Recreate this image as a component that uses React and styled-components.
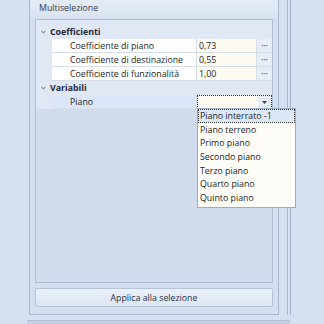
import React from "react";
import styled, { createGlobalStyle } from "styled-components";

const Global = createGlobalStyle`
  html, body { margin: 0; padding: 0; }
  body {
    width: 324px; height: 324px; overflow: hidden;
    background: #d5e1f0;
    font-family: "Open Sans", "Noto Sans", sans-serif;
    font-size: 8.8px;
    color: #1e1e1e;
  }
`;

const Page = styled.div`
  width: 324px; height: 324px;
  display: flex; flex-direction: column;
  background: #d5e1f0;
`;
const MainRow = styled.div`
  display: flex; height: 315px;
`;
const Gutter = styled.div`
  width: 29px; flex: none;
`;
const Panel = styled.div`
  width: 250px; flex: none;
  display: flex; flex-direction: column;
  border-left: 1px solid #a7b8cf;
  border-right: 1px solid #a7b8cf;
  border-bottom: 1px solid #a7b8cf;
  background: #d3dfee;
  box-sizing: border-box;
`;
const Header = styled.div`
  height: 18px; flex: none; box-sizing: border-box;
  padding: 0 0 3px 9px;
  display: flex; align-items: center;
  background: linear-gradient(#e3ebf6, #dae4f1);
  color: #2f3b4c;
`;
const Body = styled.div`
  flex: 1; display: flex; flex-direction: column;
  padding: 1px 5px 7px 5px;
  gap: 5px;
`;
const Tree = styled.div`
  flex: 1;
  border: 1px solid #aebdd1;
  background: #d0dcec;
  position: relative;
`;
const Grid = styled.div`
  background: #dfe8f4;
  padding-top: 5px;
`;
const CatRow = styled.div`
  height: 14px; display: flex; align-items: center;
  font-weight: 700; color: #1f2a3a;
`;
const Chevron = styled.svg`
  width: 5px; height: 4px; margin: 0 4px 0 5px;
`;
const PropRow = styled.div`
  height: 14px; display: flex;
  margin-left: 16px;
`;
const NameCell = styled.div`
  width: 145px; flex: none; box-sizing: border-box;
  padding-left: 18px;
  display: flex; align-items: center;
  background: ${p => (p.$sel ? "#dbe7f8" : "#ffffff")};
  border-bottom: 1px solid #d6dee9;
  border-right: 1px solid #d6dee9;
  white-space: nowrap;
`;
const ValueCell = styled.div`
  flex: 1; box-sizing: border-box;
  padding-left: 2px;
  display: flex; align-items: center;
  background: #fdfaf1;
  border-bottom: 1px solid #d6dee9;
  border-right: 1px solid #d6dee9;
`;
const Ellipsis = styled.div`
  width: 15px; flex: none; box-sizing: border-box;
  display: flex; align-items: center; justify-content: center;
  background: #e6edf7;
  border-bottom: 1px solid #d6dee9;
  color: #5a6a80; font-size: 6px;
`;
const Editor = styled.div`
  flex: 1; box-sizing: border-box; position: relative;
  display: flex; align-items: center; justify-content: flex-end;
  background: #fdfaf1;
  border: 1px dotted #333;
`;
const Arrow = styled.div`
  width: 13px; height: 100%; display: flex; align-items: center; justify-content: center;
  background: #e6edf7;
`;
const DropList = styled.div`
  position: absolute; left: -1px; top: 12px;
  width: 99px;
  background: #fdfcf6;
  border: 1px solid #9aabc3;
  box-sizing: border-box;
  padding: 0 0 2px 0;
  z-index: 2;
`;
const Item = styled.div`
  height: 13.7px; display: flex; align-items: center;
  padding-left: 2px; box-sizing: border-box;
  color: #1e1e1e;
  white-space: nowrap;
  ${p => p.$active && `
    background: #dde8f6;
    border: 1px dotted #333;
    padding-left: 1px;
  `}
`;
const ApplyButton = styled.button`
  height: 19px; flex: none;
  font: inherit; color: #2a3444;
  border: 1px solid #b4c3d6; border-radius: 2px;
  background: linear-gradient(#eaf1fa, #dbe6f3);
  padding: 0;
`;
const Splitter = styled.div`
  width: 15px; flex: none; display: flex;
`;
const Line = styled.div`
  width: ${p => p.$w}px; background: ${p => p.$c};
  margin-left: ${p => p.$ml || 0}px;
`;
const BottomStrip = styled.div`
  flex: 1; display: flex; align-items: flex-end;
  padding-left: 27px;
`;
const BottomLine = styled.div`
  width: 263px; height: 3px; background: #c3d0e2; border-top: 1px solid #b0bfd3;
`;

const Down = () => (
  <Chevron viewBox="0 0 5 4"><path d="M0.5 0.8 L2.5 3 L4.5 0.8" fill="none" stroke="#5b6b80" strokeWidth="1" /></Chevron>
);

const props = [
  ["Coefficiente di piano", "0,73"],
  ["Coefficiente di destinazione", "0,55"],
  ["Coefficiente di funzionalità", "1,00"],
];
const items = ["Piano interrato -1", "Piano terreno", "Primo piano", "Secondo piano", "Terzo piano", "Quarto piano", "Quinto piano"];

export default function App() {
  return (
    <Page>
      <Global />
      <MainRow>
        <Gutter />
        <Panel>
          <Header>Multiselezione</Header>
          <Body>
            <Tree>
              <Grid>
                <CatRow><Down />Coefficienti</CatRow>
                {props.map(([n, v]) => (
                  <PropRow key={n}>
                    <NameCell>{n}</NameCell>
                    <ValueCell>{v}</ValueCell>
                    <Ellipsis>•••</Ellipsis>
                  </PropRow>
                ))}
                <CatRow><Down />Variabili</CatRow>
                <PropRow>
                  <NameCell $sel>Piano</NameCell>
                  <Editor>
                    <Arrow>
                      <svg width="5" height="3" viewBox="0 0 5 3"><path d="M0 0 H5 L2.5 3 Z" fill="#444" /></svg>
                    </Arrow>
                    <DropList>
                      {items.map((it, i) => <Item key={it} $active={i === 0}>{it}</Item>)}
                    </DropList>
                  </Editor>
                </PropRow>
              </Grid>
            </Tree>
            <ApplyButton>Applica alla selezione</ApplyButton>
          </Body>
        </Panel>
        <Splitter>
          <Line $w={1} $c="#a9b9cf" $ml={8} />
          <Line $w={1} $c="#9fb1ca" $ml={2} />
        </Splitter>
      </MainRow>
      <BottomStrip><BottomLine /></BottomStrip>
    </Page>
  );
}
